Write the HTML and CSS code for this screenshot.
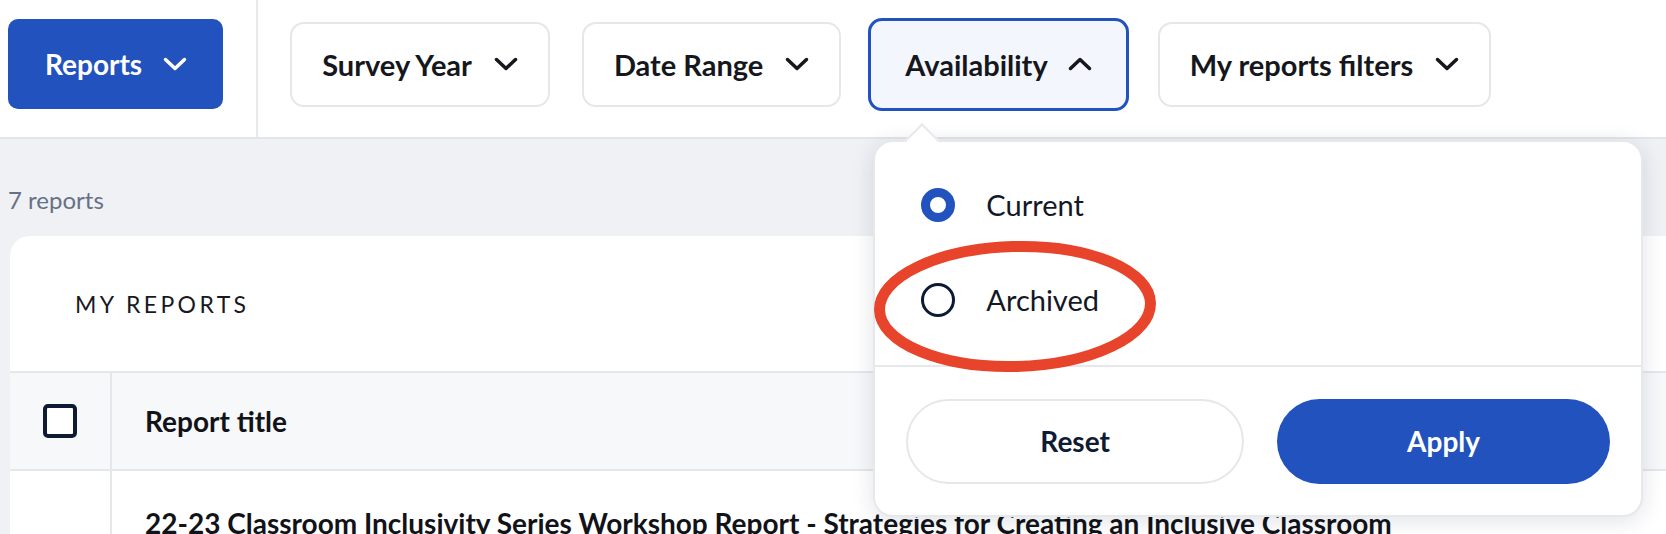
FILE: index.html
```html
<!DOCTYPE html>
<html lang="en">
<head>
    <meta charset="UTF-8">
    <meta name="viewport" content="width=device-width, initial-scale=1.0">
    <title>My Reports</title>
    <link rel="stylesheet" href="styles.css">
</head>
<body>
    <header class="toolbar">
        <div class="toolbar-primary">
            <button class="btn-primary">
                Reports
                <svg class="chevron" viewBox="0 0 24 14"><path d="M2.5 2.5 L12 11.5 L21.5 2.5"/></svg>
            </button>
        </div>
        <div class="toolbar-filters">
            <button class="filter-btn">
                Survey Year
                <svg class="chevron" viewBox="0 0 24 14"><path d="M2.5 2.5 L12 11.5 L21.5 2.5"/></svg>
            </button>
            <button class="filter-btn">
                Date Range
                <svg class="chevron" viewBox="0 0 24 14"><path d="M2.5 2.5 L12 11.5 L21.5 2.5"/></svg>
            </button>
            <div class="filter-menu">
                <button class="filter-btn is-open">
                    Availability
                    <svg class="chevron" viewBox="0 0 24 14"><path d="M2.5 11.5 L12 2.5 L21.5 11.5"/></svg>
                </button>
                <div class="dropdown">
                    <span class="dropdown-arrow"></span>
                    <div class="dropdown-options">
                        <label class="radio-option"><span class="radio checked"></span>Current</label>
                        <label class="radio-option"><span class="radio"></span>Archived</label>
                    </div>
                    <div class="dropdown-footer">
                        <button class="pill-btn reset">Reset</button>
                        <button class="pill-btn apply">Apply</button>
                    </div>
                </div>
            </div>
            <button class="filter-btn">
                My reports filters
                <svg class="chevron" viewBox="0 0 24 14"><path d="M2.5 2.5 L12 11.5 L21.5 2.5"/></svg>
            </button>
        </div>
    </header>

    <main class="content">
        <div class="report-count">7 reports</div>
        <section class="card">
            <h2 class="card-title">MY REPORTS</h2>
            <div class="table">
                <div class="table-row table-head">
                    <div class="cell cell-check"><span class="checkbox"></span></div>
                    <div class="cell cell-title">Report title</div>
                </div>
                <div class="table-row">
                    <div class="cell cell-check"></div>
                    <div class="cell cell-title row-title">22-23 Classroom Inclusivity Series Workshop Report - Strategies for Creating an Inclusive Classroom</div>
                </div>
            </div>
        </section>
    </main>

    <!-- annotation circle drawn over the menu -->
    <svg class="annotation" viewBox="0 0 292 140"><ellipse cx="146" cy="69.5" rx="135.5" ry="60" transform="rotate(-1.5 146 69.5)"/></svg>
</body>
</html>
```

FILE: styles.css
```css
body {
    margin: 0;
    position: relative;
    overflow: hidden;
    height: 534px;
    font-family: Lato, 'Noto Sans', sans-serif;
    background-color: #eff1f5;
    color: #15171c;
}
button {
    font-family: inherit;
    cursor: pointer;
}
.toolbar {
    display: flex;
    height: 139px;
    box-sizing: border-box;
    background-color: white;
    border-bottom: 2px solid #e3e5ea;
}
.toolbar-primary {
    padding: 19px 33px 0 8px;
    border-right: 2px solid #e8e9ed;
}
.btn-primary {
    display: flex;
    align-items: center;
    gap: 21px;
    height: 90px;
    padding: 0 36px 0 37px;
    border: none;
    border-radius: 10px;
    background-color: #2152bd;
    color: white;
    font-size: 28px;
    font-weight: 700;
}
.chevron {
    width: 24px;
    height: 14px;
    fill: none;
    stroke: currentColor;
    stroke-width: 3.5;
    stroke-linecap: round;
    stroke-linejoin: round;
}
.toolbar-filters {
    display: flex;
    align-items: center;
    gap: 32px;
    height: 90px;
    padding: 19px 0 0 32px;
}
.filter-btn {
    display: flex;
    align-items: center;
    gap: 22px;
    height: 85px;
    padding: 0 30px;
    border: 2px solid #e6e7eb;
    border-radius: 14px;
    background-color: white;
    color: #15171c;
    font-size: 29px;
    font-weight: 700;
}
.filter-menu {
    position: relative;
    display: flex;
    margin: 0 -3px 0 -5px;
}
.filter-btn.is-open {
    height: 93px;
    padding: 0 34px;
    border: 3px solid #2152bd;
    background-color: #f3f6fc;
    gap: 20px;
}
.dropdown {
    position: absolute;
    left: 5px;
    top: 122px;
    width: 770px;
    box-sizing: border-box;
    border: 2px solid #e7e8ec;
    border-radius: 20px;
    background-color: white;
    box-shadow: 0 4px 22px rgba(20, 30, 60, 0.13);
    z-index: 10;
}
.dropdown-arrow {
    position: absolute;
    top: -14px;
    left: 35px;
    width: 24px;
    height: 24px;
    box-sizing: border-box;
    background-color: white;
    border-top: 2px solid #e7e8ec;
    border-left: 2px solid #e7e8ec;
    transform: rotate(45deg);
}
.dropdown-options {
    position: relative;
    display: flex;
    flex-direction: column;
    gap: 31px;
    padding: 31px 31px 33px 46px;
    border-bottom: 2px solid #e7e8ec;
}
.radio-option {
    display: flex;
    align-items: center;
    gap: 31px;
    height: 64px;
    font-size: 29px;
    color: #121826;
}
.radio {
    width: 34px;
    height: 34px;
    box-sizing: border-box;
    border: 3px solid #0c1a36;
    border-radius: 50%;
    background-color: white;
}
.radio.checked {
    border: 9.5px solid #2152bd;
}
.dropdown-footer {
    display: flex;
    gap: 33px;
    padding: 32px 31px 31px;
}
.pill-btn {
    flex: 1;
    height: 85px;
    border-radius: 43px;
    font-size: 28px;
    font-weight: 700;
}
.pill-btn.reset {
    border: 2px solid #e6e7eb;
    background-color: white;
    color: #0f1b33;
}
.pill-btn.apply {
    border: none;
    background-color: #2152bd;
    color: white;
}
.content {
    padding-top: 46px;
}
.report-count {
    height: 29px;
    line-height: 29px;
    margin: 0 0 22px 8px;
    font-size: 24px;
    color: #677085;
}
.card {
    margin: 0 -30px 0 10px;
    background-color: white;
    border-radius: 20px 20px 0 0;
}
.card-title {
    display: flex;
    align-items: center;
    height: 135px;
    margin: 0;
    padding-left: 65px;
    font-size: 23px;
    font-weight: 400;
    letter-spacing: 3.4px;
    color: #17191f;
}
.table-row {
    display: grid;
    grid-template-columns: 102px 1fr;
}
.table-head {
    height: 100px;
    box-sizing: border-box;
    border-top: 2px solid #e6e7eb;
    border-bottom: 2px solid #e6e7eb;
    background-color: #f7f8fa;
}
.cell-check {
    display: flex;
    align-items: center;
    justify-content: center;
    border-right: 2px solid #e6e7eb;
    min-height: 96px;
}
.checkbox {
    width: 34px;
    height: 34px;
    box-sizing: border-box;
    border: 4px solid #0f1b33;
    border-radius: 5px;
    background-color: white;
}
.cell-title {
    display: flex;
    align-items: center;
    padding-left: 33px;
    font-size: 28px;
    font-weight: 700;
    color: #111318;
}
.row-title {
    align-items: flex-start;
    padding-top: 35px;
    white-space: nowrap;
}
.annotation {
    position: absolute;
    left: 869px;
    top: 237px;
    width: 292px;
    height: 140px;
    z-index: 20;
    fill: none;
    stroke: #e8432b;
    stroke-width: 11;
}
```
